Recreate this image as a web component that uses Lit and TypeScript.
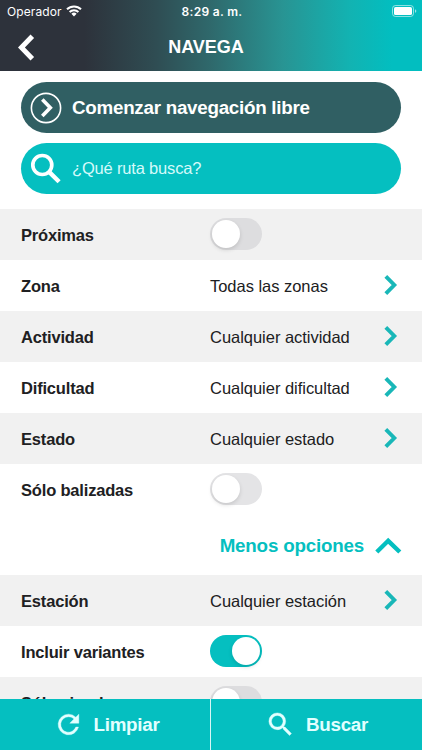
import { LitElement, html, css, svg } from "lit";
import { customElement, property } from "lit/decorators.js";

@customElement("app-switch")
class AppSwitch extends LitElement {
  @property({ type: Boolean, reflect: true }) on = false;
  static styles = css`
    :host { display: block; width: 52px; height: 32px; box-sizing: border-box; border-radius: 16px; background: var(--off, #e4e4e6); padding: 2px; margin-bottom: 1px; }
    .knob { width: 28px; height: 28px; border-radius: 50%; background: #fff; box-shadow: 0 2px 4px rgba(0, 0, 0, 0.13); }
    :host([on]) { background: #05bfc0; }
    :host([on]) .knob { margin-left: 20px; }
  `;
  render() {
    return html`<div class="knob"></div>`;
  }
}

type Row = { label: string; value?: string; on?: boolean };

const mainRows: Row[] = [
  { label: "Próximas" },
  { label: "Zona", value: "Todas las zonas" },
  { label: "Actividad", value: "Cualquier actividad" },
  { label: "Dificultad", value: "Cualquier dificultad" },
  { label: "Estado", value: "Cualquier estado" },
  { label: "Sólo balizadas" },
];

const extraRows: Row[] = [
  { label: "Estación", value: "Cualquier estación" },
  { label: "Incluir variantes", on: true },
  { label: "Sólo circulares" },
];

const lens = svg`<path fill="currentColor" stroke="currentColor" stroke-width=".3" d="M15.5 14h-.79l-.28-.27A6.47 6.47 0 0 0 16 9.5 6.5 6.5 0 1 0 9.5 16c1.61 0 3.09-.59 4.23-1.57l.27.28v.79l5 4.99L20.49 19l-4.99-5zm-6 0a4.5 4.5 0 1 1 0-9 4.5 4.5 0 0 1 0 9z"/>`;

@customElement("app-root")
class AppRoot extends LitElement {
  static styles = css`
    :host { display: flex; flex-direction: column; height: 750px; overflow: hidden; background: #fff; color: #202022; font-family: "Liberation Sans", Arial, sans-serif; font-size: 16.5px; }
    * { box-sizing: border-box; }
    svg { display: block; flex: none; }
    .top { flex: none; height: 71px; color: #fff; background: linear-gradient(90deg, #2d323b 0, #2d323b 20%, #2f4d53 37%, #2f696c 50%, #289493 67%, #12b3b2 83%, #02bec0 93%, #02bec0 100%); }
    .status { display: grid; grid-template-columns: 1fr auto 1fr; align-items: center; height: 22px; padding: 0 5px 0 7px; font-family: Inter, sans-serif; font-size: 12px; }
    .carrier { display: flex; align-items: center; gap: 4px; letter-spacing: 0.1px; }
    .time { font-weight: 600; letter-spacing: 0.3px; }
    .battery { justify-self: end; }
    .nav { display: grid; grid-template-columns: 1fr auto 1fr; align-items: center; height: 49px; padding: 2px 28px 0 18px; }
    .title { font-size: 18px; font-weight: 700; letter-spacing: -0.05px; }
    .pills { flex: none; height: 138px; padding: 11px 21px 0; display: flex; flex-direction: column; gap: 10px; }
    .pill { display: flex; align-items: center; height: 51px; border-radius: 26px; background: #05bfc0; color: #fff; }
    .pill svg { margin-left: 9px; margin-right: 10px; }
    .free { background: #305f63; font-size: 18.8px; font-weight: 700; letter-spacing: -0.26px; }
    .find { color: #d5fafa; letter-spacing: -0.18px; }
    .find svg { color: #fff; }
    .rows { flex: none; }
    .row { display: grid; grid-template-columns: 189px 1fr 14px; align-items: center; height: 51px; padding: 0 24px 0 21px; }
    .row:nth-child(odd) { background: #f1f1f1; --off: #dddddf; }
    .row span { padding-top: 1px; }
    .label { font-weight: 700; letter-spacing: -0.18px; }
    .value { letter-spacing: -0.03px; }
    .go { color: #19b7b8; margin-bottom: 1px; }
    .less { flex: none; height: 60px; display: flex; align-items: center; justify-content: flex-end; gap: 11px; padding: 2px 20px 0 0; color: #05bfc0; font-weight: 700; font-size: 18.8px; letter-spacing: -0.2px; }
    .extra { flex: 1; min-height: 0; overflow: hidden; }
    .bar { flex: none; height: 51px; display: grid; grid-template-columns: 210px 1px 1fr; background: #05bfc0; color: #e2ffff; font-weight: 700; font-size: 18.8px; letter-spacing: -0.28px; }
    .action { display: flex; align-items: center; justify-content: center; }
    .line { background: #d8f6f6; }
    .clear { gap: 10px; padding-left: 2px; }
    .search { gap: 10px; }
  `;

  row(r: Row) {
    return html`<div class="row">
      <span class="label">${r.label}</span>
      ${r.value
        ? html`<span class="value">${r.value}</span>
            <svg class="go" width="14" height="20" viewBox="0 0 14 20"><path d="M1.8 1.4 10.3 10l-8.5 8.6" fill="none" stroke="currentColor" stroke-width="3.9" /></svg>`
        : html`<app-switch ?on=${r.on}></app-switch>`}
    </div>`;
  }

  render() {
    return html`
      <header class="top">
        <div class="status">
          <span class="carrier">Operador
            <svg width="16" height="12" viewBox="0 0 16 12"><g fill="none" stroke="#fff" stroke-width="2"><path d="M1 4.3a10 10 0 0 1 14 0" /><path d="M3.6 7a6.3 6.3 0 0 1 8.8 0" /></g><path d="M5.4 8.8a3.8 3.8 0 0 1 5.2 0L8 11.5z" fill="#fff" /></svg>
          </span>
          <span class="time">8:29 a. m.</span>
          <svg class="battery" width="25" height="12" viewBox="0 0 25 12"><rect x=".5" y=".5" width="21" height="11" rx="3" fill="none" stroke="#fff" stroke-opacity=".55" /><rect x="2" y="2" width="18" height="8" rx="1.6" fill="#fff" /><path d="M23 4.2v3.6q1.3-.4 1.3-1.8T23 4.2z" fill="#fff" fill-opacity=".6" /></svg>
        </div>
        <div class="nav">
          <svg width="17" height="28" viewBox="0 0 17 28"><path d="M14.3 2.3 3.4 13.5l10.9 11.2" fill="none" stroke="#fff" stroke-width="5" /></svg>
          <span class="title">NAVEGA</span>
        </div>
      </header>
      <div class="pills">
        <div class="pill free">
          <svg width="32" height="32" viewBox="0 0 32 32"><circle cx="16" cy="16" r="14.6" fill="none" stroke="#fff" stroke-width="1.6" /><path d="M12.3 7.5 20.3 15.7l-8 8.3" fill="none" stroke="#fff" stroke-width="3.6" /></svg>
          <span>Comenzar navegación libre</span>
        </div>
        <div class="pill find">
          <svg width="32" height="32" viewBox="0 0 32 32"><circle cx="12.3" cy="12" r="9.5" fill="none" stroke="currentColor" stroke-width="3.7" /><path d="m18.6 18.4 10.5 10.3" stroke="currentColor" stroke-width="4.4" /></svg>
          <span>¿Qué ruta busca?</span>
        </div>
      </div>
      <div class="rows">${mainRows.map((r) => this.row(r))}</div>
      <div class="less">
        <span>Menos opciones</span>
        <svg width="27" height="18" viewBox="0 0 27 18"><path d="M1.8 15 13.2 3.8 24.8 15" fill="none" stroke="currentColor" stroke-width="4.4" /></svg>
      </div>
      <div class="extra">${extraRows.map((r) => this.row(r))}</div>
      <footer class="bar">
        <div class="action clear">
          <svg width="31" height="31" viewBox="0 0 24 24"><path fill="currentColor" stroke="currentColor" stroke-width=".3" d="M17.65 6.35A7.96 7.96 0 0 0 12 4a8 8 0 1 0 7.73 10h-2.08A6 6 0 1 1 12 6c1.66 0 3.14.69 4.22 1.78L13 11h7V4z" /></svg>
          <span>Limpiar</span>
        </div>
        <div class="line"></div>
        <div class="action search">
          <svg width="31" height="31" viewBox="0 0 24 24">${lens}</svg>
          <span>Buscar</span>
        </div>
      </footer>
    `;
  }
}
